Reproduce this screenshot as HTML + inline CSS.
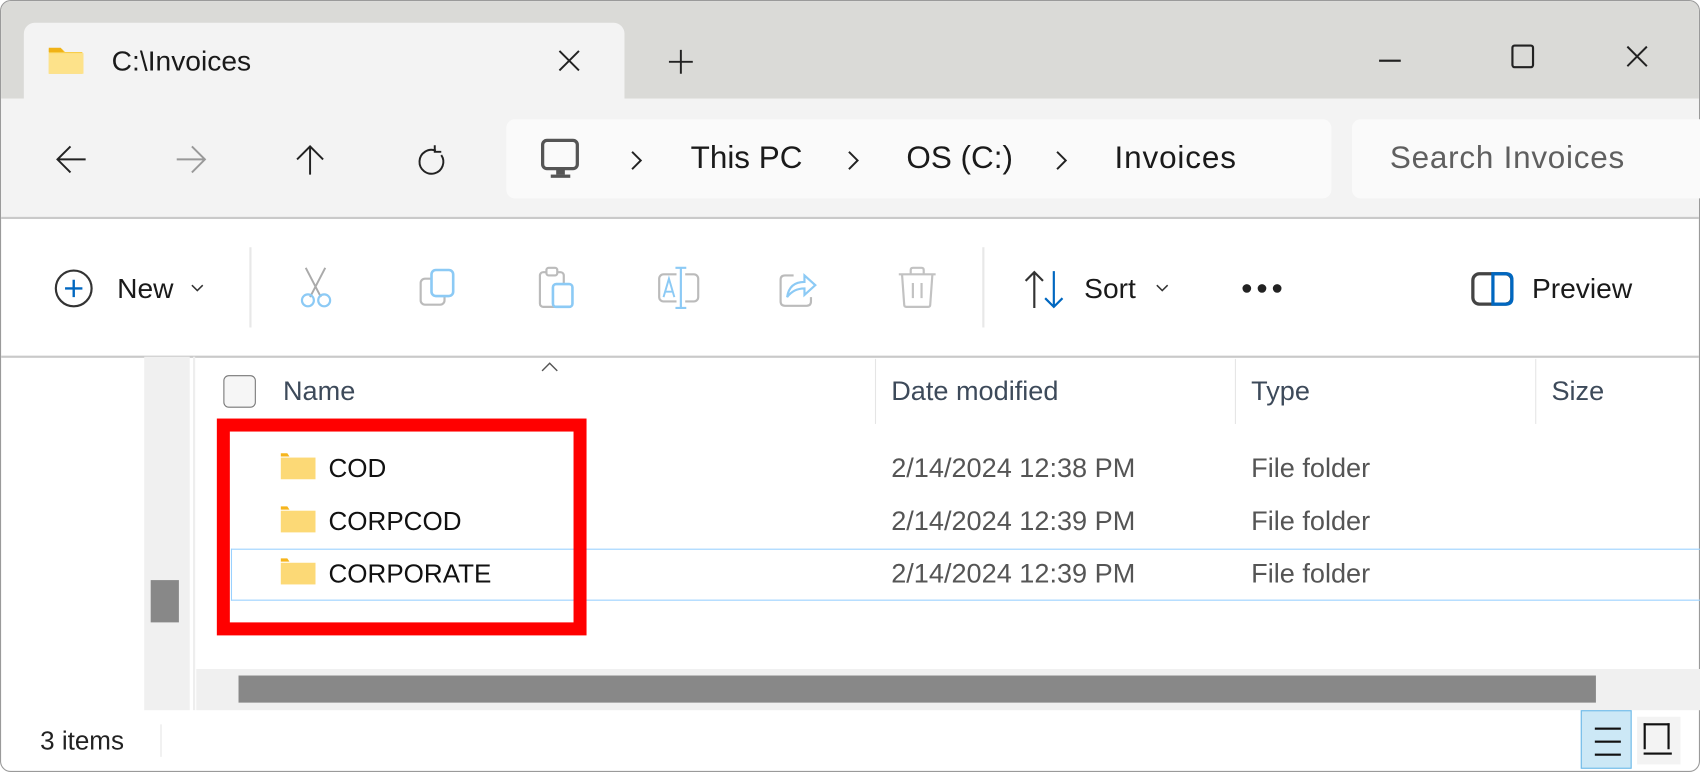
<!DOCTYPE html>
<html><head><meta charset="utf-8"><style>
html,body{margin:0;padding:0;background:#fff;overflow:hidden;width:1700px;height:772px}
#w{position:absolute;left:0;top:0;width:1568px;height:712px;transform:scale(1.08418,1.0843);transform-origin:0 0;font-family:"Liberation Sans",sans-serif;background:#fff}
.a{position:absolute}
.t{position:absolute;white-space:nowrap;line-height:1}
svg{position:absolute;overflow:visible}
</style></head><body><div id="w">
<div class="a" style="left:0;top:0;width:1566px;height:710px;border:1px solid #9a9a9a;border-radius:10px;background:#fff;overflow:hidden">
 <div class="a" style="left:0;top:0;width:1568px;height:90px;background:#dadad7"></div>
 <div class="a" style="left:21px;top:20px;width:554px;height:75px;background:#f3f3f3;border-radius:10px 10px 0 0"></div>
 <div class="a" style="left:0;top:90px;width:1568px;height:110px;background:#f3f3f3"></div>
 <div class="a" style="left:0;top:199px;width:1568px;height:2px;background:#c9c9c9"></div>
 <div class="a" style="left:0;top:327px;width:1568px;height:2px;background:#c9c9c9"></div>
</div>
<svg style="left:44px;top:43px" width="34" height="26"><path d="M1 2h12l3 3h16v20H1z" fill="#f8cd4a"/><rect x="1" y="6" width="32" height="19" fill="#fde28a"/><path d="M1 1h11l3 4H1z" fill="#f0b216"/></svg>
<div class="t" style="left:103px;top:43px;font-size:26px;color:#1a1a1a">C:\Invoices</div>
<svg style="left:515px;top:46px" width="20" height="20"><path d="M1 1L19 19M19 1L1 19" stroke="#222" stroke-width="1.8"/></svg>
<svg style="left:617px;top:46px" width="22" height="22"><path d="M11 0V22M0 11H22" stroke="#222" stroke-width="1.8"/></svg>
<div class="a" style="left:1272px;top:55px;width:20px;height:2px;background:#222"></div>
<div class="a" style="left:1394px;top:41px;width:17px;height:18px;border:2px solid #222;border-radius:3px"></div>
<svg style="left:1500px;top:42px" width="20" height="20"><path d="M1 1L19 19M19 1L1 19" stroke="#222" stroke-width="1.8"/></svg>
<svg style="left:52px;top:134px" width="28" height="26"><path d="M27 13H2M13 1L1 13L13 25" fill="none" stroke="#222" stroke-width="1.8"/></svg>
<svg style="left:162px;top:134px" width="28" height="26"><path d="M1 13H26M15 1L27 13L15 25" fill="none" stroke="#999" stroke-width="1.8"/></svg>
<svg style="left:272px;top:133px" width="28" height="28"><path d="M14 28V2M2 14L14 2L26 14" fill="none" stroke="#222" stroke-width="1.8"/></svg>
<svg style="left:384px;top:133px" width="28" height="30"><path d="M18 6A11 11 0 1 0 23 10" fill="none" stroke="#222" stroke-width="1.8"/><path d="M17 1V7H23" fill="none" stroke="#222" stroke-width="1.8"/></svg>
<div class="a" style="left:467px;top:110px;width:761px;height:73px;background:#fafafa;border-radius:8px"></div>
<div class="a" style="left:1247px;top:110px;width:330px;height:73px;background:#fafafa;border-radius:8px"></div>
<svg style="left:499px;top:128px" width="36" height="38"><rect x="1.5" y="1.5" width="32" height="26" rx="4" fill="none" stroke="#555" stroke-width="3"/><rect x="14" y="28" width="8" height="5" fill="#555"/><rect x="9" y="33" width="18" height="3" fill="#555"/></svg>
<svg style="left:581px;top:139px" width="12" height="18"><path d="M2 1L10 9L2 17" fill="none" stroke="#222" stroke-width="1.8"/></svg>
<div class="t" style="left:637px;top:132px;font-size:29px;color:#1a1a1a">This PC</div>
<svg style="left:781px;top:139px" width="12" height="18"><path d="M2 1L10 9L2 17" fill="none" stroke="#222" stroke-width="1.8"/></svg>
<div class="t" style="left:836px;top:132px;font-size:29px;color:#1a1a1a">OS (C:)</div>
<svg style="left:973px;top:139px" width="12" height="18"><path d="M2 1L10 9L2 17" fill="none" stroke="#222" stroke-width="1.8"/></svg>
<div class="t" style="left:1028px;top:132px;font-size:29px;color:#1a1a1a;letter-spacing:0.8px">Invoices</div>
<div class="t" style="left:1282px;top:132px;font-size:29px;color:#5f5f5f;letter-spacing:0.7px">Search Invoices</div>
<svg style="left:50px;top:248px" width="36" height="36"><circle cx="18" cy="18" r="16.5" fill="none" stroke="#333" stroke-width="2"/><path d="M18 10V26M10 18H26" stroke="#0067c0" stroke-width="2.2"/></svg>
<div class="t" style="left:108px;top:253px;font-size:26px;color:#1a1a1a">New</div>
<svg style="left:176px;top:262px" width="12" height="8"><path d="M1 1L6 6L11 1" fill="none" stroke="#333" stroke-width="1.4"/></svg>
<div class="a" style="left:230px;top:228px;width:2px;height:74px;background:#e8e8e8"></div>
<svg style="left:276px;top:246px" width="34" height="38"><path d="M6 1L20 28M24 1L10 28" stroke="#aaa" stroke-width="1.8"/><circle cx="8" cy="31" r="5.5" fill="none" stroke="#8ccaf5" stroke-width="2"/><circle cx="23" cy="31" r="5.5" fill="none" stroke="#8ccaf5" stroke-width="2"/></svg>
<svg style="left:386px;top:247px" width="36" height="36"><rect x="2" y="10" width="22" height="24" rx="4" fill="none" stroke="#bbb" stroke-width="2"/><rect x="12" y="2" width="20" height="24" rx="4" fill="#fff" stroke="#8ccaf5" stroke-width="2.4"/></svg>
<svg style="left:496px;top:245px" width="36" height="40"><rect x="2" y="6" width="22" height="32" rx="3" fill="none" stroke="#bbb" stroke-width="2"/><rect x="8" y="2" width="10" height="7" rx="2" fill="#fff" stroke="#bbb" stroke-width="2"/><rect x="14" y="17" width="18" height="21" rx="3" fill="#fff" stroke="#8ccaf5" stroke-width="2.4"/></svg>
<svg style="left:606px;top:244px" width="40" height="40"><rect x="2" y="9" width="36" height="25" rx="4" fill="none" stroke="#bbb" stroke-width="2"/><rect x="18" y="4" width="8" height="35" fill="#fff"/><path d="M22 3V40M17 3H27M17 40H27" stroke="#8ccaf5" stroke-width="2"/><path d="M6 30L11 13L16 30M8 25H14" fill="none" stroke="#8ccaf5" stroke-width="1.8"/></svg>
<svg style="left:718px;top:246px" width="36" height="38"><path d="M14 8H6Q2 8 2 12V32Q2 36 6 36H26Q30 36 30 32V28" fill="none" stroke="#bbb" stroke-width="2"/><path d="M8 28Q10 14 24 14V8L34 17L24 26V20Q14 20 8 28Z" fill="none" stroke="#8ccaf5" stroke-width="2"/></svg>
<svg style="left:828px;top:245px" width="36" height="40"><path d="M1 8H35M12 8V4Q12 2 14 2H22Q24 2 24 4V8M4 8L6 36Q6 38 8 38H28Q30 38 30 36L32 8M14 16V30M22 16V30" fill="none" stroke="#c2c2c2" stroke-width="2"/></svg>
<div class="a" style="left:906px;top:228px;width:2px;height:74px;background:#e8e8e8"></div>
<svg style="left:944px;top:249px" width="42" height="36"><path d="M10 35V2M2 10L10 2L18 10" fill="none" stroke="#333" stroke-width="2"/><path d="M28 1V34M20 26L28 34L36 26" fill="none" stroke="#0067c0" stroke-width="2"/></svg>
<div class="t" style="left:1000px;top:253px;font-size:26px;color:#1a1a1a">Sort</div>
<svg style="left:1066px;top:262px" width="12" height="8"><path d="M1 1L6 6L11 1" fill="none" stroke="#333" stroke-width="1.4"/></svg>
<div class="a" style="left:1146px;top:262px;width:8px;height:8px;border-radius:50%;background:#222"></div>
<div class="a" style="left:1160px;top:262px;width:8px;height:8px;border-radius:50%;background:#222"></div>
<div class="a" style="left:1174px;top:262px;width:8px;height:8px;border-radius:50%;background:#222"></div>
<svg style="left:1357px;top:251px" width="40" height="32"><rect x="1.5" y="1.5" width="36" height="28" rx="6" fill="none" stroke="#444" stroke-width="3"/><path d="M20 1.5H32Q37.5 1.5 37.5 7V24Q37.5 29.5 32 29.5H20Z" fill="none" stroke="#0067c0" stroke-width="3"/></svg>
<div class="t" style="left:1413px;top:253px;font-size:26px;color:#1a1a1a">Preview</div>
<div class="a" style="left:133px;top:329px;width:42px;height:326px;background:#f0f0f0"></div>
<div class="a" style="left:139px;top:535px;width:26px;height:39px;background:#888"></div>
<div class="a" style="left:178px;top:329px;width:2px;height:326px;background:#eee"></div>
<svg style="left:499px;top:334px" width="16" height="10"><path d="M1 8L8 1L15 8" fill="none" stroke="#555" stroke-width="1.3"/></svg>
<div class="a" style="left:206px;top:346px;width:28px;height:28px;border:1.5px solid #777;border-radius:5px;background:#f6f6f6"></div>
<div class="t" style="left:261px;top:349px;font-size:25px;color:#3d4a5a">Name</div>
<div class="a" style="left:807px;top:331px;width:1px;height:60px;background:#e5e5e5"></div>
<div class="a" style="left:1139px;top:331px;width:1px;height:60px;background:#e5e5e5"></div>
<div class="a" style="left:1416px;top:331px;width:1px;height:60px;background:#e5e5e5"></div>
<div class="t" style="left:822px;top:349px;font-size:25px;color:#3d4a5a">Date modified</div>
<div class="t" style="left:1154px;top:349px;font-size:25px;color:#3d4a5a">Type</div>
<div class="t" style="left:1431px;top:349px;font-size:25px;color:#3d4a5a">Size</div>
<div class="a" style="left:213px;top:506px;width:1355px;height:48px;border-top:1px solid #99d1ff;border-bottom:1px solid #99d1ff;border-left:1px solid #99d1ff;box-sizing:border-box"></div>
<svg style="left:258px;top:417px" width="34" height="28"><path d="M1 1h6l2 3H1z" fill="#f6b51c"/><rect x="1" y="5" width="32" height="20" fill="#fcd976"/></svg>
<svg style="left:258px;top:466px" width="34" height="28"><path d="M1 1h6l2 3H1z" fill="#f6b51c"/><rect x="1" y="5" width="32" height="20" fill="#fcd976"/></svg>
<svg style="left:258px;top:514px" width="34" height="28"><path d="M1 1h6l2 3H1z" fill="#f6b51c"/><rect x="1" y="5" width="32" height="20" fill="#fcd976"/></svg>
<div class="t" style="left:303px;top:421px;font-size:24px;color:#111">COD</div>
<div class="t" style="left:303px;top:470px;font-size:24px;color:#111">CORPCOD</div>
<div class="t" style="left:303px;top:518px;font-size:24px;color:#111">CORPORATE</div>
<div class="t" style="left:822px;top:420px;font-size:25px;color:#555">2/14/2024 12:38 PM</div>
<div class="t" style="left:822px;top:469px;font-size:25px;color:#555">2/14/2024 12:39 PM</div>
<div class="t" style="left:822px;top:517px;font-size:25px;color:#555">2/14/2024 12:39 PM</div>
<div class="t" style="left:1154px;top:420px;font-size:25px;color:#555">File folder</div>
<div class="t" style="left:1154px;top:469px;font-size:25px;color:#555">File folder</div>
<div class="t" style="left:1154px;top:517px;font-size:25px;color:#555">File folder</div>
<div class="a" style="left:200px;top:386px;width:341px;height:200px;border:12px solid #ff0000;box-sizing:border-box"></div>
<div class="a" style="left:181px;top:617px;width:1387px;height:38px;background:#f0f0f0"></div>
<div class="a" style="left:220px;top:623px;width:1252px;height:25px;background:#888"></div>
<div class="t" style="left:37px;top:672px;font-size:24px;color:#222">3 items</div>
<div class="a" style="left:148px;top:668px;width:1px;height:30px;background:#e5e5e5"></div>
<div class="a" style="left:1458px;top:655px;width:47px;height:54px;background:#cce8f6;border:1px solid #6ab8e8;box-sizing:border-box"></div>
<div class="a" style="left:1471px;top:671px;width:24px;height:2px;background:#111"></div>
<div class="a" style="left:1471px;top:683px;width:24px;height:2px;background:#111"></div>
<div class="a" style="left:1471px;top:695px;width:24px;height:2px;background:#111"></div>
<div class="a" style="left:1510px;top:661px;width:40px;height:44px;background:#f3f3f3"></div>
<div class="a" style="left:1516px;top:667px;width:24px;height:24px;border:2px solid #111;border-bottom:none;box-sizing:border-box"></div>
<div class="a" style="left:1516px;top:694px;width:26px;height:2px;background:#111"></div>
</div></body></html>
